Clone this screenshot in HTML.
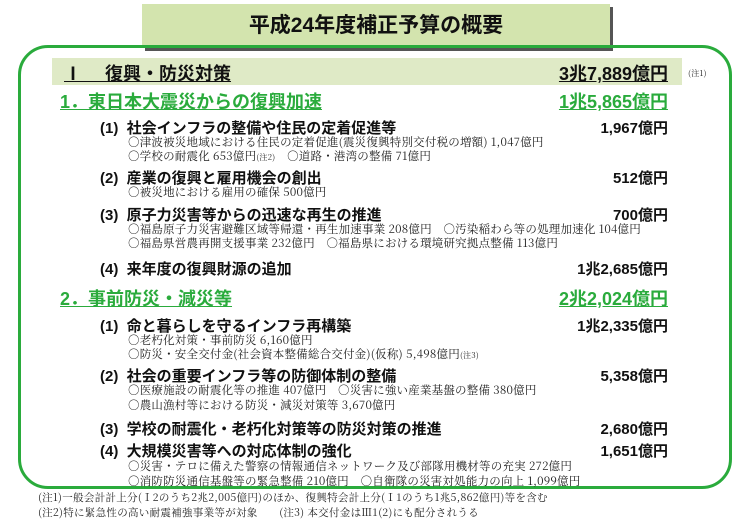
<!DOCTYPE html>
<html><head><meta charset="utf-8"><style>
body{margin:0;width:750px;height:519px;background:#fff;position:relative;overflow:hidden;font-family:"Liberation Sans","Noto Sans CJK JP",sans-serif;}
.a{position:absolute;white-space:nowrap;}
.title{left:142px;top:4px;width:468px;height:44px;background:#d3e4ae;box-shadow:3px 3px 0 #555;text-align:center;line-height:44px;font-size:21px;font-weight:bold;color:#111;}
.box{left:18px;top:45px;width:708px;height:438px;border:3px solid #2aab3c;border-radius:30px;}
.bar{left:52px;top:58px;width:630px;height:27px;background:#dfeac6;}
.h0{font-size:18px;font-weight:bold;color:#111;text-decoration:underline;}
.h1{font-size:18px;font-weight:bold;color:#2aab3c;text-decoration:underline;}
.h2{font-size:15px;font-weight:bold;color:#111;}
.s{font-family:"Noto Serif CJK SC","Liberation Serif",serif;font-size:11.5px;line-height:14px;color:#222;letter-spacing:0.2px;}
.r{text-align:right;}
.n{font-family:"Noto Serif CJK SC","Liberation Serif",serif;font-size:10.5px;line-height:13px;color:#222;letter-spacing:0.3px;}
</style></head><body>
<div class="a title">平成24年度補正予算の概要</div>
<div class="a box"></div>
<div class="a bar"></div>
<div class="a h0" style="left:64px;top:60px;">Ⅰ　 復興・防災対策</div>
<div class="a h0 r" style="right:82px;top:60px;">3兆7,889億円</div>
<div class="a n" style="left:688px;top:67px;font-size:8px;">(注1)</div>
<div class="a h1" style="left:60px;top:88px;">1．東日本大震災からの復興加速</div>
<div class="a h1 r" style="right:82px;top:88px;">1兆5,865億円</div>

<div class="a h2" style="left:100px;top:117px;">(1)&nbsp; 社会インフラの整備や住民の定着促進等</div>
<div class="a h2 r" style="right:82px;top:117px;">1,967億円</div>
<div class="a s" style="left:128px;top:135px;">○津波被災地域における住民の定着促進(震災復興特別交付税の増額) 1,047億円</div>
<div class="a s" style="left:128px;top:149px;">○学校の耐震化 653億円<span style="font-size:8px">(注2)</span>　○道路・港湾の整備 71億円</div>

<div class="a h2" style="left:100px;top:167px;">(2)&nbsp; 産業の復興と雇用機会の創出</div>
<div class="a h2 r" style="right:82px;top:167px;">512億円</div>
<div class="a s" style="left:128px;top:185px;">○被災地における雇用の確保 500億円</div>

<div class="a h2" style="left:100px;top:204px;">(3)&nbsp; 原子力災害等からの迅速な再生の推進</div>
<div class="a h2 r" style="right:82px;top:204px;">700億円</div>
<div class="a s" style="left:128px;top:222px;">○福島原子力災害避難区域等帰還・再生加速事業 208億円　○汚染稲わら等の処理加速化 104億円</div>
<div class="a s" style="left:128px;top:236px;">○福島県営農再開支援事業 232億円　○福島県における環境研究拠点整備 113億円</div>

<div class="a h2" style="left:100px;top:258px;">(4)&nbsp; 来年度の復興財源の追加</div>
<div class="a h2 r" style="right:82px;top:258px;">1兆2,685億円</div>

<div class="a h1" style="left:60px;top:285px;">2．事前防災・減災等</div>
<div class="a h1 r" style="right:82px;top:285px;">2兆2,024億円</div>

<div class="a h2" style="left:100px;top:315px;">(1)&nbsp; 命と暮らしを守るインフラ再構築</div>
<div class="a h2 r" style="right:82px;top:315px;">1兆2,335億円</div>
<div class="a s" style="left:128px;top:333px;">○老朽化対策・事前防災 6,160億円</div>
<div class="a s" style="left:128px;top:347px;">○防災・安全交付金(社会資本整備総合交付金)(仮称) 5,498億円<span style="font-size:8px">(注3)</span></div>

<div class="a h2" style="left:100px;top:365px;">(2)&nbsp; 社会の重要インフラ等の防御体制の整備</div>
<div class="a h2 r" style="right:82px;top:365px;">5,358億円</div>
<div class="a s" style="left:128px;top:383px;">○医療施設の耐震化等の推進 407億円　○災害に強い産業基盤の整備 380億円</div>
<div class="a s" style="left:128px;top:398px;">○農山漁村等における防災・減災対策等 3,670億円</div>

<div class="a h2" style="left:100px;top:418px;">(3)&nbsp; 学校の耐震化・老朽化対策等の防災対策の推進</div>
<div class="a h2 r" style="right:82px;top:418px;">2,680億円</div>

<div class="a h2" style="left:100px;top:440px;">(4)&nbsp; 大規模災害等への対応体制の強化</div>
<div class="a h2 r" style="right:82px;top:440px;">1,651億円</div>
<div class="a s" style="left:128px;top:459px;">○災害・テロに備えた警察の情報通信ネットワーク及び部隊用機材等の充実 272億円</div>
<div class="a s" style="left:128px;top:474px;">○消防防災通信基盤等の緊急整備 210億円　○自衛隊の災害対処能力の向上 1,099億円</div>

<div class="a n" style="left:38px;top:491px;">(注1)一般会計計上分(Ⅰ2のうち2兆2,005億円)のほか、復興特会計上分(Ⅰ1のうち1兆5,862億円)等を含む</div>
<div class="a n" style="left:38px;top:506px;">(注2)特に緊急性の高い耐震補強事業等が対象　　(注3) 本交付金はⅢ1(2)にも配分されうる</div>
</body></html>
